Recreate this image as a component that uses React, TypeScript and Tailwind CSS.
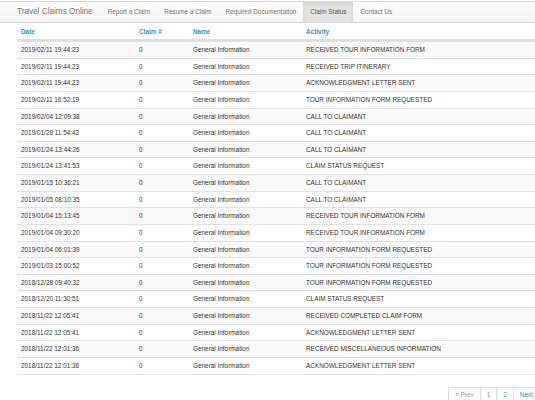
import React from 'react';

const rows = [
  ['2019/02/11 19:44:23', 'RECEIVED TOUR INFORMATION FORM'],
  ['2019/02/11 19:44:23', 'RECEIVED TRIP ITINERARY'],
  ['2019/02/11 19:44:23', 'ACKNOWLEDGMENT LETTER SENT'],
  ['2019/02/11 16:52:19', 'TOUR INFORMATION FORM REQUESTED'],
  ['2019/02/04 12:09:38', 'CALL TO CLAIMANT'],
  ['2019/01/28 11:54:42', 'CALL TO CLAIMANT'],
  ['2019/01/24 13:44:26', 'CALL TO CLAIMANT'],
  ['2019/01/24 13:41:53', 'CLAIM STATUS REQUEST'],
  ['2019/01/15 10:36:21', 'CALL TO CLAIMANT'],
  ['2019/01/05 08:10:35', 'CALL TO CLAIMANT'],
  ['2019/01/04 15:13:45', 'RECEIVED TOUR INFORMATION FORM'],
  ['2019/01/04 09:30:20', 'RECEIVED TOUR INFORMATION FORM'],
  ['2019/01/04 06:01:39', 'TOUR INFORMATION FORM REQUESTED'],
  ['2019/01/03 15:00:52', 'TOUR INFORMATION FORM REQUESTED'],
  ['2018/12/28 09:40:32', 'TOUR INFORMATION FORM REQUESTED'],
  ['2018/12/20 11:30:51', 'CLAIM STATUS REQUEST'],
  ['2018/11/22 12:05:41', 'RECEIVED COMPLETED CLAIM FORM'],
  ['2018/11/22 12:05:41', 'ACKNOWLEDGMENT LETTER SENT'],
  ['2018/11/22 12:01:36', 'RECEIVED MISCELLANEOUS INFORMATION'],
  ['2018/11/22 12:01:36', 'ACKNOWLEDGMENT LETTER SENT'],
];

const navItems = ['Report a Claim', 'Resume a Claim', 'Required Documentation', 'Claim Status', 'Contact Us'];

export default function App() {
  return (
    <div className="w-[535px] h-[400px] overflow-hidden bg-white font-['Liberation_Sans',Arial,sans-serif] text-[#333]">
      <div className="w-[557px]">
        {/* Navbar */}
        <div className="mt-[1px] h-[22px] flex items-stretch border-y border-[#d9d9d9] bg-gradient-to-b from-white to-[#f1f1f1]">
          <div className="pl-[17px] pr-[8px] flex items-center text-[8.2px] text-[#777]">Travel Claims Online</div>
          {navItems.map((item) => (
            <div
              key={item}
              className={
                item === 'Claim Status'
                  ? 'px-[7px] flex items-center text-[6.4px] text-[#555] bg-[#e3e3e3] shadow-[inset_0_2px_4px_rgba(0,0,0,0.08)]'
                  : 'px-[7px] flex items-center text-[6.4px] text-[#777]'
              }
            >
              {item}
            </div>
          ))}
        </div>

        {/* Claim history table */}
        <div className="mx-[17px] mt-[2px] text-[6.4px]">
          <div className="h-[16px] flex items-center border-b-2 border-[#ddd] font-bold text-[#3b8ed8]">
            <div className="w-[118px] pl-[4px]">Date</div>
            <div className="w-[54px] pl-[4px]">Claim #</div>
            <div className="w-[113px] pl-[4px]">Name</div>
            <div className="flex-1 pl-[4px]">Activity</div>
          </div>
          {rows.map(([date, activity], i) => (
            <div
              key={i}
              className={`h-[16.63px] flex items-center text-[#333] border-t border-[#e2e2e2] first:border-t-0 ${i % 2 === 0 ? 'bg-[#f9f9f9]' : 'bg-white'}`}
            >
              <div className="w-[118px] pl-[4px]">{date}</div>
              <div className="w-[54px] pl-[4px] text-[#333]">0</div>
              <div className="w-[113px] pl-[4px]">General Information</div>
              <div className="flex-1 pl-[4px]">{activity}</div>
            </div>
          ))}
          <div className="border-t border-[#e2e2e2]" />
        </div>

        {/* Pagination */}
        <div className="mt-[12px] mr-[17px] flex justify-end text-[6.4px]">
          <div className="flex h-[16px] border border-[#ddd] rounded-[2px]">
            <div className="px-[6px] flex items-center text-[#999]">« Prev</div>
            <div className="px-[6px] flex items-center border-l border-[#ddd] text-[#999]">1</div>
            <div className="px-[6px] flex items-center border-l border-[#ddd] text-[#3b8ed8]">2</div>
            <div className="px-[6px] flex items-center border-l border-[#ddd] text-[#3b8ed8]">Next</div>
          </div>
        </div>
      </div>
    </div>
  );
}
